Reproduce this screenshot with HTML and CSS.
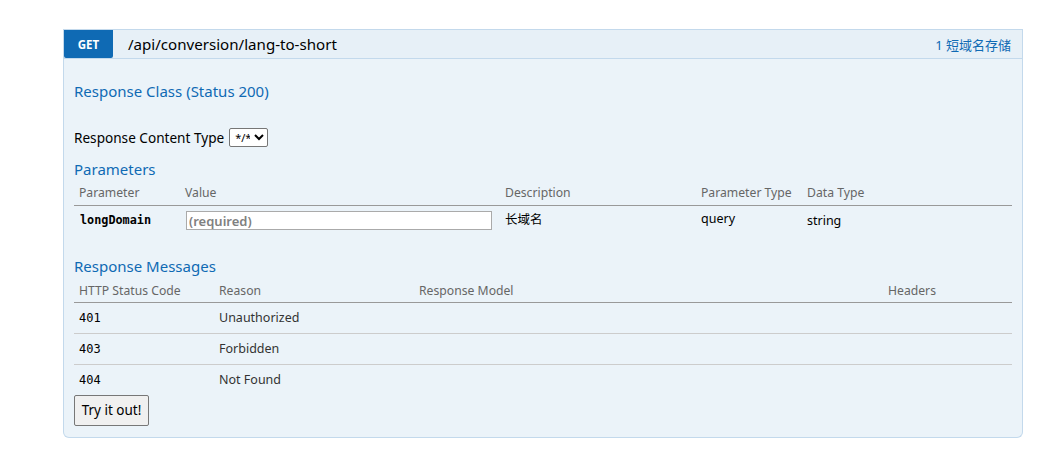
FILE: index.html
```html
<!DOCTYPE html>
<html>
<head>
<meta charset="utf-8">
<link rel="stylesheet" href="styles.css">
</head>
<body>
<div class="wrap">
  <div class="operation">
    <div class="heading">
      <span class="method">GET</span>
      <span class="path">/api/conversion/lang-to-short</span>
      <span class="tag">1 短域名存储</span>
    </div>
    <div class="content">
      <h4 class="title first">Response Class (Status 200)</h4>
      <div class="ctype">
        <span>Response Content Type</span>
        <select class="sel"><option>*/*</option></select>
      </div>
      <h4 class="title">Parameters</h4>
      <table class="params">
        <thead>
          <tr>
            <th class="c1">Parameter</th>
            <th class="c2">Value</th>
            <th class="c3">Description</th>
            <th class="c4">Parameter Type</th>
            <th class="c5">Data Type</th>
          </tr>
        </thead>
        <tbody>
          <tr>
            <td class="code">longDomain</td>
            <td><input class="req" type="text" placeholder="(required)"></td>
            <td class="desc">长域名</td>
            <td class="ptype">query</td>
            <td class="dtype">string</td>
          </tr>
        </tbody>
      </table>
      <h4 class="title">Response Messages</h4>
      <table class="msgs">
        <thead>
          <tr>
            <th class="m1">HTTP Status Code</th>
            <th class="m2">Reason</th>
            <th class="m3">Response Model</th>
            <th class="m4">Headers</th>
          </tr>
        </thead>
        <tbody>
          <tr><td class="code2">401</td><td>Unauthorized</td><td></td><td></td></tr>
          <tr><td class="code2">403</td><td>Forbidden</td><td></td><td></td></tr>
          <tr class="last"><td class="code2">404</td><td>Not Found</td><td></td><td></td></tr>
        </tbody>
      </table>
      <button class="try">Try it out!</button>
    </div>
  </div>
</div>
</body>
</html>
```
FILE: styles.css
```css
* { box-sizing: border-box; }
html, body { margin: 0; padding: 0; background: #fff; }
body {
  font-family: "Noto Sans", "Open Sans", "Noto Sans CJK SC", sans-serif;
  font-size: 13px;
  color: #333;
}
.wrap { padding: 29px 0 0 63px; width: 1023px; }
.operation { width: 960px; }
.heading {
  display: flex;
  align-items: stretch;
  height: 30px;
  background: #e7f0f7;
  border: 1px solid #c3d9ec;
}
.method {
  width: 49px;
  background: #0f6ab4;
  color: #fff;
  font-size: 11.5px;
  font-weight: bold;
  display: flex;
  align-items: center;
  justify-content: center;
  border-radius: 0 0 2px 2px;
}
.path {
  margin-left: 15px;
  font-size: 15.1px;
  color: #000;
  display: flex;
  align-items: center;
  flex: 1;
}
.tag {
  display: flex;
  align-items: center;
  color: #0f6ab4;
  font-size: 13px;
  padding-right: 11px;
  font-family: "Noto Sans", "Noto Sans CJK SC", sans-serif;
}
.content {
  background: #ebf3f9;
  border: 1px solid #c3d9ec;
  border-top: none;
  border-radius: 0 0 6px 6px;
  padding: 22px 10px 10px 10px;
}
.title {
  margin: 0;
  color: #0f6ab4;
  font-size: 15px;
  font-weight: normal;
  line-height: 20px;
}
.title.first { margin-bottom: 26px; }
.ctype {
  display: flex;
  align-items: center;
  height: 20px;
  margin-bottom: 12px;
  font-size: 13.6px;
  color: #000;
}
.sel {
  margin-left: 5px;
  font-size: 11px;
  height: 19px;
  width: 39px;
  padding: 0 1px;
  font-family: "Noto Sans", sans-serif;
  border: 1px solid #767676;
  border-radius: 2px;
  background: #fff;
  color: #000;
}
table {
  width: 100%;
  border-collapse: collapse;
}
th {
  text-align: left;
  font-weight: normal;
  color: #666;
  font-size: 12.2px;
  white-space: nowrap;
  padding: 2px 5px 3px 5px;
  line-height: 18px;
  border-bottom: 1px solid #999;
}
td {
  padding: 6px 5px 5px 5px;
  vertical-align: top;
  font-size: 12.5px;
  line-height: 18px;
  color: #333;
  white-space: nowrap;
}
.params { margin-top: 3px; margin-bottom: 20px; }
.c1 { width: 106px; }
.c2 { width: 320px; }
.c3 { width: 196px; }
.c4 { width: 106px; }
.params td { padding-top: 6px; padding-bottom: 5px; height: 30px; }
.params td.code {
  font-family: "DejaVu Sans Mono", "Liberation Mono", monospace;
  font-weight: bold;
  font-size: 11.8px;
  color: #000;
  padding-top: 5px;
  padding-left: 6px;
}
.req {
  display: block;
  width: 306px;
  height: 19px;
  margin: -1px 0 0 1px;
  border: 1px solid #aaa;
  background: #fff;
  font-family: "Noto Sans", sans-serif;
  font-size: 13px;
  padding: 0 2px;
}
.req::placeholder { color: #808080; font-weight: 600; }
.params td.desc { font-family: "Noto Sans CJK SC", sans-serif; color: #000; padding-top: 4px; font-size: 12.5px; }
.params td.ptype { color: #000; padding-top: 4px; }
.params td.dtype { color: #000; padding-top: 6px; }
.msgs { margin-top: 4px; }
.msgs th { padding-bottom: 2px; }
.m1 { width: 140px; }
.m2 { width: 200px; }
.m3 { width: 469px; }
.msgs td { padding: 6px 5px 6px 5px; border-bottom: 1px solid #ccc; height: 31px; }
.msgs tr.last td { border-bottom: none; height: 29px; }
.msgs td.code2 {
  font-family: "DejaVu Sans Mono", "Liberation Mono", monospace;
  font-size: 12px;
  color: #000;
}
.try {
  display: block;
  margin-top: 0;
  margin-bottom: 1px;
  height: 31px;
  width: 75px;
  background: #f0f0f0;
  border: 1px solid #777;
  border-radius: 2px;
  font-family: "Noto Sans", sans-serif;
  font-size: 13.5px;
  color: #000;
  padding: 0;
}
```
